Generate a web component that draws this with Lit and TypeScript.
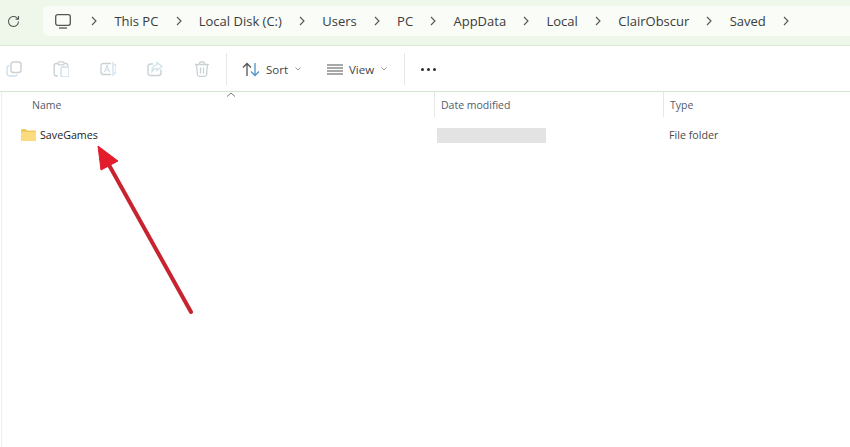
import { LitElement, html, css, svg } from "lit";
import { customElement } from "lit/decorators.js";

const crumbs = ["This PC", "Local Disk (C:)", "Users", "PC", "AppData", "Local", "ClairObscur", "Saved"];

const chevron = html`<svg class="chev" width="6" height="10" viewBox="0 0 6 10"><path d="M1 1l4 4-4 4" fill="none" stroke="#555" stroke-width="1.1"/></svg>`;
const drop = html`<svg class="drop" width="6" height="4" viewBox="0 0 6 4"><path d="M.5.5L3 3 5.5.5" fill="none" stroke="#9a9a9a" stroke-width="1"/></svg>`;

const G = "#c9d1d5";
const B = "#cfe0ea";

const icons = [
  svg`<rect x="5" y="1" width="10" height="10.5" rx="2.5" fill="none" stroke="${G}" stroke-width="1.4"/><path d="M3.5 4.5A2.5 2.5 0 0 0 1 7v5a3 3 0 0 0 3 3h5a2.5 2.5 0 0 0 2.2-1.5" fill="none" stroke="${B}" stroke-width="1.4"/>`,
  svg`<path d="M5 2.5H3A1.8 1.8 0 0 0 1.2 4.3v9A1.8 1.8 0 0 0 3 15h2M11 2.5h2A1.8 1.8 0 0 1 14.8 4v1" fill="none" stroke="${G}" stroke-width="1.4"/><rect x="5" y=".8" width="6" height="3" rx="1" fill="none" stroke="${G}" stroke-width="1.2"/><rect x="8" y="6" width="8" height="10" rx="2" fill="none" stroke="${B}" stroke-width="1.4"/>`,
  svg`<path d="M3 2.5h8M3 13.5h8M3 2.5A2 2 0 0 0 1 4.5v7a2 2 0 0 0 2 2" fill="none" stroke="${G}" stroke-width="1.3"/><path d="M13 1v14M14 3.5a2 2 0 0 1 2 1.5v6a2 2 0 0 1-2 1.5" fill="none" stroke="${B}" stroke-width="1.3"/><path d="M4.5 11l2.5-6.5L9.5 11M5.5 9h3" fill="none" stroke="${B}" stroke-width="1.2"/>`,
  svg`<path d="M14 8.5V12a2.5 2.5 0 0 1-2.5 2.5h-8A2.5 2.5 0 0 1 1 12V5.5A2.5 2.5 0 0 1 3.5 3H6" fill="none" stroke="${G}" stroke-width="1.4"/><path d="M10 1.5L15 5.5 10 9.5V7.3C8 7.3 6.3 8.3 5 10.5 5 7 7 4.2 10 3.8z" fill="none" stroke="${B}" stroke-width="1.3"/>`,
  svg`<path d="M1 3.5h14M5.5 3.5V2.5A1.5 1.5 0 0 1 7 1h2a1.5 1.5 0 0 1 1.5 1.5v1M2.5 3.5l.9 10a2 2 0 0 0 2 1.8h5.2a2 2 0 0 0 2-1.8l.9-10M6.5 6.5v6M9.5 6.5v6" fill="none" stroke="${G}" stroke-width="1.3"/>`,
];

@customElement("app-root")
export class AppRoot extends LitElement {
  static styles = css`
    :host {
      display: block;
      position: relative;
      width: 850px;
      height: 447px;
      overflow: hidden;
      background: #fff;
      font-family: "Open Sans", "Noto Sans", sans-serif;
      font-size: 12px;
      color: #333;
    }
    .top {
      height: 46px;
      box-sizing: border-box;
      background: #eff7eb;
      border-bottom: 1.5px solid #d9e9d2;
      display: flex;
      align-items: flex-start;
      padding: 6px 0 0 7px;
    }
    .refresh { margin-top: 9px; margin-right: 23px; }
    .address {
      flex: 1;
      height: 30px;
      background: #f9fcf7;
      border-radius: 5px 0 0 5px;
      display: flex;
      align-items: center;
      padding-left: 12px;
      gap: 17.2px;
      color: #3b3b3b;
      font-size: 13px;
      white-space: nowrap;
    }
    .address svg.pc { margin-right: 3px; }
    .toolbar {
      height: 46px;
      box-sizing: border-box;
      border-bottom: 1.5px solid #d5e5cd;
      display: flex;
      align-items: center;
      padding: 1px 0 0 6px;
      color: #444;
    }
    .tool { width: 16px; height: 16px; margin-right: 31px; }
    .tool svg { display: block; }
    .sep { width: 1px; height: 32px; background: #e6e6e6; flex: none; }
    .sep.first { margin-left: -15px; margin-right: 15px; }
    .action { display: flex; align-items: center; }
    .action .label { margin-left: 6px; font-size: 11.5px; }
    .action .drop { margin-left: 7px; }
    .action.sort { width: 85px; }
    .action.view { width: 77px; }
    .dots { display: flex; gap: 3px; margin-left: 16px; }
    .dots i { width: 3px; height: 3px; border-radius: 50%; background: #2e2e2e; }
    .list {
      border-left: 1px solid #eeeeee;
      margin-left: 1px;
      height: 355px;
      position: relative;
    }
    .grid { display: grid; grid-template-columns: 432px 229px 1fr; }
    .head { height: 25px; color: #515c6b; font-size: 10.5px; }
    .head > div { display: flex; align-items: center; box-sizing: border-box; }
    .head .name { padding-left: 30px; }
    .head .col { border-left: 1px solid #e6e6e6; padding-left: 6px; }
    .caret { position: absolute; left: 224px; top: 0; }
    .row { margin-top: 9px; height: 18px; align-items: center; font-size: 10.7px; color: #222; }
    .file { display: flex; align-items: center; padding-left: 19px; gap: 4px; }
    .blank { width: 109px; height: 15px; background: #e3e3e3; margin-left: 3px; }
    .type { color: #4a4a4a; padding-left: 6px; }
    .arrow { position: absolute; left: 0; top: 0; pointer-events: none; }
  `;

  render() {
    return html`
      <div class="top">
        <svg class="refresh" width="13" height="13" viewBox="0 0 13 13"><path d="M11.5 6.5a5 5 0 1 1-1.6-3.7L11.5 4.2M11.5 1v3.2H8.5" fill="none" stroke="#555" stroke-width="1.1"/></svg>
        <div class="address">
          <svg class="pc" width="16" height="15" viewBox="0 0 16 15"><rect x=".7" y=".7" width="14.6" height="10.6" rx="2" fill="none" stroke="#555" stroke-width="1.3"/><path d="M4 14h8" stroke="#555" stroke-width="1.3"/></svg>
          ${crumbs.map((c) => html`${chevron}<span>${c}</span>`)}
          ${chevron}
        </div>
      </div>
      <div class="toolbar">
        ${icons.map((i) => html`<div class="tool"><svg width="16" height="16" viewBox="0 0 16 16">${i}</svg></div>`)}
        <div class="sep first"></div>
        <div class="action sort">
          <svg width="18" height="15" viewBox="0 0 18 15"><path d="M5 14V1.5M1 5.5l4-4 4 4" fill="none" stroke="#555" stroke-width="1.3"/><path d="M13 1v12.5M9 9.5l4 4 4-4" fill="none" stroke="#4d94c9" stroke-width="1.3"/></svg>
          <span class="label">Sort</span>${drop}
        </div>
        <div class="action view">
          <svg width="16" height="11" viewBox="0 0 16 11"><path d="M0 1h16M0 4h16M0 7h16M0 10h16" stroke="#555" stroke-width="1.1"/></svg>
          <span class="label">View</span>${drop}
        </div>
        <div class="sep"></div>
        <div class="dots"><i></i><i></i><i></i></div>
      </div>
      <div class="list">
        <svg class="caret" width="10" height="5" viewBox="0 0 10 5"><path d="M1 4.5L5 1l4 3.5" fill="none" stroke="#777" stroke-width="1"/></svg>
        <div class="grid head">
          <div class="name">Name</div>
          <div class="col">Date modified</div>
          <div class="col">Type</div>
        </div>
        <div class="grid row">
          <div class="file">
            <svg width="15" height="12" viewBox="0 0 15 12"><path d="M0 1.2A1.2 1.2 0 0 1 1.2 0h3.6l1.4 1.5h7.6A1.2 1.2 0 0 1 15 2.7v8.1a1.2 1.2 0 0 1-1.2 1.2H1.2A1.2 1.2 0 0 1 0 10.8z" fill="#f0c95e"/><path d="M0 3h15v7.8a1.2 1.2 0 0 1-1.2 1.2H1.2A1.2 1.2 0 0 1 0 10.8z" fill="#fbdb7e"/></svg>
            <span>SaveGames</span>
          </div>
          <div><div class="blank"></div></div>
          <div class="type">File folder</div>
        </div>
      </div>
      <svg class="arrow" width="850" height="447" viewBox="0 0 850 447">
        <path d="M109 165L191 312" stroke="#c8242f" stroke-width="4" stroke-linecap="round" fill="none"/>
        <path d="M98 146L118 161 101 170z" fill="#e31c2b" stroke="#e31c2b" stroke-width="1" stroke-linejoin="round"/>
      </svg>
    `;
  }
}
